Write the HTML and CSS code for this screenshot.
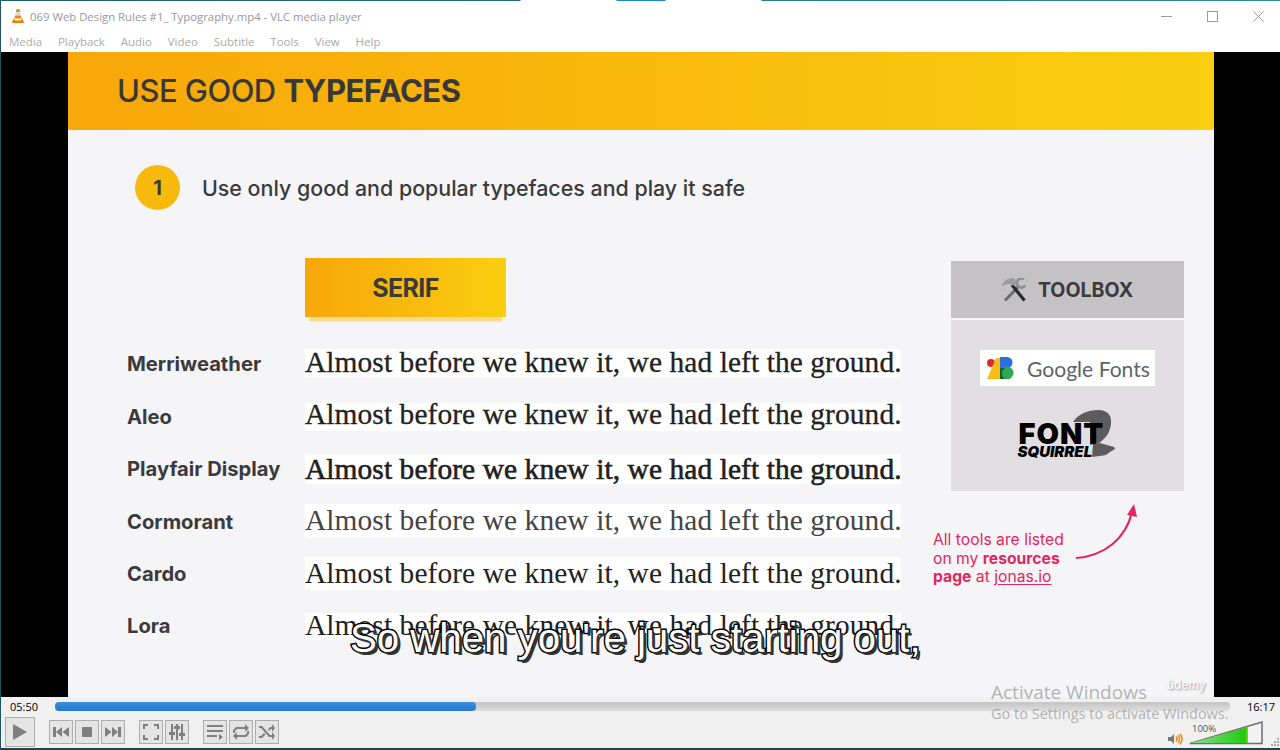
FILE: index.html
```html
<!DOCTYPE html>
<html lang="en">
<head>
<meta charset="UTF-8" />
<title>069 Web Design Rules #1_ Typography.mp4 - VLC media player</title>
<link rel="stylesheet" href="styles.css">
</head>
<body>

<div class="window">
  <div class="titlebar">
    <svg class="cone" viewBox="0 0 16 16" width="16" height="16">
      <path d="M6.6 1h2.8l.7 3H5.900z" fill="#f08a0c"/>
      <path d="M5.800 4.200h4.400l.6 3H5.200z" fill="#d8d8d8"/>
      <path d="M5.100 7.400h5.800l.7 3.200H4.400z" fill="#f08a0c"/>
      <path d="M3.600 10.600h1l-.3 1.300c1.800.7 5.600.7 7.400 0l-.3-1.300h1l1.600 4.400H2z" fill="#ee7d05"/>
    </svg>
    <span class="title-text">069 Web Design Rules #1_ Typography.mp4 - VLC media player</span>
    <div class="win-buttons">
      <svg viewBox="0 0 11 11" width="11" height="11"><path d="M0 5.500h11" stroke="#9a9a9a" fill="none"/></svg>
      <svg viewBox="0 0 11 11" width="11" height="11"><rect x=".5" y=".5" width="10" height="10" stroke="#9a9a9a" fill="none"/></svg>
      <svg viewBox="0 0 11 11" width="11" height="11"><path d="M.5.5l10 10M10.500.5l-10 10" stroke="#9a9a9a" fill="none"/></svg>
    </div>
  </div>

  <div class="menubar">
    <span>Media</span>
    <span>Playback</span>
    <span>Audio</span>
    <span>Video</span>
    <span>Subtitle</span>
    <span>Tools</span>
    <span>View</span>
    <span>Help</span>
  </div>

  <div class="video">
    <div class="slide">
      <div class="slide-header">
        <h1>USE GOOD <b>TYPEFACES</b></h1>
      </div>

      <div class="step">
        <span class="step-num">1</span>
        <span class="step-text">Use only good and popular typefaces and play it safe</span>
      </div>

      <div class="columns">
        <div class="fonts">
          <div class="chip">SERIF</div>

          <div class="font-name">Merriweather</div>
          <div class="sample merriweather">Almost before we knew it, we had left the ground.</div>
          <div class="font-name">Aleo</div>
          <div class="sample aleo">Almost before we knew it, we had left the ground.</div>
          <div class="font-name">Playfair Display</div>
          <div class="sample playfair">Almost before we knew it, we had left the ground.</div>
          <div class="font-name">Cormorant</div>
          <div class="sample cormorant">Almost before we knew it, we had left the ground.</div>
          <div class="font-name">Cardo</div>
          <div class="sample cardo">Almost before we knew it, we had left the ground.</div>
          <div class="font-name">Lora</div>
          <div class="sample lora">Almost before we knew it, we had left the ground.</div>
        </div>

        <div class="side">
          <div class="toolbox-head">
            <svg viewBox="0 0 24 24" width="24" height="24">
              <path d="M3 22.500L16 9" stroke="#6d6f72" stroke-width="3.200" fill="none"/>
              <path d="M22 1.200A4.500 4.500 0 1 0 23.200 7.500" stroke="#8a8c8f" stroke-width="2.600" fill="none"/>
              <path d="M10 7l12.500 15.500" stroke="#2a2a2a" stroke-width="3.200" fill="none"/>
              <path d="M0 9C0 4 5 0 11 0l4.500 3-2.500 5-4-1.500C6 5.500 3 6 0 9z" fill="#9a9c9f"/>
            </svg>
            <span>TOOLBOX</span>
          </div>
          <div class="toolbox-body">
            <div class="gfonts">
              <svg viewBox="0 0 27 22" width="27" height="22">
                <circle cx="4" cy="6" r="4" fill="#e0282e"/>
                <path d="M0 22L9 1h4v21z" fill="#f9bc15"/>
                <path d="M13 0h7a5.500 5.500 0 0 1 0 11h-7z" fill="#2b6fdb"/>
                <circle cx="20" cy="16" r="6.500" fill="#2fa84f"/>
                <path d="M13 11h5a6.500 6.500 0 0 0 0 11h-5z" fill="#0d652d"/>
              </svg>
              <span>Google Fonts</span>
            </div>
            <div class="squirrel">
              <svg viewBox="0 0 100 54" width="100" height="54">
                <path d="M55 14C60 6 70 2 80 2c10 0 14 6 13 14-1 9-6 15-12 19l-9 2V14z" fill="#5d5b5e"/>
                <path d="M75 36l7-1 7 2 7 2 1 2-5 3-4 3-6 1-8 1z" fill="#5d5b5e"/>
              </svg>
              <span class="squirrel-font">FONT</span>
              <span class="squirrel-name">SQUIRREL</span>
            </div>
          </div>

          <div class="note">
            <p>All tools are listed<br>on my <b>resources</b><br><b>page</b> at <u>jonas.io</u></p>
            <svg class="note-arrow" viewBox="0 0 66 60" width="66" height="60">
              <path d="M1 54c29-2 50-20 56-46" fill="none" stroke="#e0285f" stroke-width="2.200"/>
              <path d="M52 11L59 0l3 13z" fill="#e0285f"/>
            </svg>
          </div>
        </div>
      </div>
    </div>
  </div>

  <div class="controls">
    <div class="seek-row">
      <span class="time">05:50</span>
      <div class="seek"><div class="seek-fill"></div></div>
      <span class="time">16:17</span>
    </div>
    <div class="button-row">
      <button class="btn btn-play"><svg viewBox="0 0 16 16" width="16" height="16"><path d="M1 0l14 8-14 8z"/></svg></button>
      <div class="btn-group">
        <button class="btn"><svg viewBox="0 0 16 12" width="16" height="12"><path d="M0 1h3v10H0zM9 1v10L3 6zM16 1v10L9.500 6z"/></svg></button>
        <button class="btn"><svg viewBox="0 0 10 10" width="10" height="10"><path d="M0 0h10v10H0z"/></svg></button>
        <button class="btn"><svg viewBox="0 0 16 12" width="16" height="12"><path d="M16 1h-3v10h3zM7 1v10l6-5zM0 1v10l6.500-5z"/></svg></button>
      </div>
      <div class="btn-group">
        <button class="btn"><svg viewBox="0 0 16 16" width="16" height="16"><path d="M0 5V0h5v2H2v3zM11 0h5v5h-2V2h-3zM0 11h2v3h3v2H0zM14 11h2v5h-5v-2h3z"/></svg></button>
        <button class="btn"><svg viewBox="0 0 16 16" width="16" height="16"><path d="M2 0h2v8h2v3H4v5H2v-5H0V8h2zM7 0h2v2h2v3H9v11H7V5H5V2h2zM12 0h2v9h2v3h-2v4h-2v-4h-2V9h2z"/></svg></button>
      </div>
      <div class="btn-group">
        <button class="btn"><svg viewBox="0 0 16 16" width="16" height="16"><path d="M0 1h16v2H0zM0 6h16v2H0zM0 11h10v2H0zM12 10l4 3-4 3z"/></svg></button>
        <button class="btn"><svg viewBox="0 0 16 16" width="16" height="16"><path d="M3 3h9V0l4 4-4 4V5H4L2 7v2H0V6zM13 13H4v3l-4-4 4-4v3h8l2-2V7h2v3z"/></svg></button>
        <button class="btn"><svg viewBox="0 0 16 16" width="16" height="16"><path d="M0 2h3l8 9h2V8l3 4-3 4v-3h-3L2 4H0zM0 12h2l3-3 1.500 1.500L3 14H0zM9 5.500L11 3h2V0l3 4-3 4V5h-1.500L10.500 7z"/></svg></button>
      </div>
      <div class="volume">
        <svg viewBox="0 0 15 12" width="15" height="12">
          <path d="M0 4h3l3-3v10L3 8H0z" fill="#777"/>
          <path d="M8 3.500c1.300 1.400 1.300 3.600 0 5M10 2c2 2.200 2 5.800 0 8M12 .8c2.800 3 2.800 7.400 0 10.400" stroke="#ee8a1a" fill="none" stroke-width="1.500"/>
        </svg>
        <div class="volume-wedge">
          <svg viewBox="0 0 74 24" width="74" height="24">
            <defs>
              <linearGradient id="vol" x1="0" x2="1" y1="0" y2="0">
                <stop offset="0" stop-color="#8fdc8f"/>
                <stop offset=".95" stop-color="#22c911"/>
                <stop offset="1" stop-color="#9ad40a"/>
              </linearGradient>
            </defs>
            <path d="M1 22.500L73 1v21.500z" fill="#f2f2f2" stroke="#6f6f6f" stroke-width="1.500"/>
            <path d="M2 22L59 6v16z" fill="url(#vol)"/>
          </svg>
          <span class="volume-label">100%</span>
        </div>
      </div>
    </div>
    <svg class="grip" viewBox="0 0 8 8" width="8" height="8">
      <path d="M6 0h2v2H6zM3 3h2v2H3zM6 3h2v2H6zM0 6h2v2H0zM3 6h2v2H3zM6 6h2v2H6z" fill="#aaa"/>
    </svg>
  </div>

  <div class="topstrip"></div>
  <div class="subtitle">So when you're just starting out,</div>
  <div class="udemy">ûdemy</div>
  <div class="activate">
    <div class="activate-title">Activate Windows</div>
    <div>Go to Settings to activate Windows.</div>
  </div>
</div>

</body>
</html>
```

FILE: styles.css
```css
* {
  box-sizing: border-box;
  margin: 0;
  padding: 0;
}

body {
  background: #fff;
  font-family: 'Open Sans', sans-serif;
}

.window {
  position: relative;
  width: 1280px;
  height: 750px;
  display: flex;
  flex-direction: column;
  border-left: 1px solid #1f5560;
  border-bottom: 2px solid #1f4650;
  overflow: hidden;
}

.topstrip {
  position: absolute;
  top: 0;
  left: 0;
  right: 0;
  height: 1px;
  background: linear-gradient(90deg, #1f5f6b 0, #1f6f7a 519px, #fff 520px, #fff 615px, #1a88c8 616px, #1a88c8 664px, #fff 665px, #fff 760px, #1f7f8a 761px, #2a8a96 1280px);
}

/* title and menu */
.titlebar {
  height: 30px;
  margin-top: 1px;
  display: flex;
  align-items: center;
  padding-left: 9px;
  background: #fff;
  flex-shrink: 0;
}

.title-text {
  margin-left: 4px;
  font-size: 11.35px;
  color: #999;
}

.win-buttons {
  margin-left: auto;
  display: flex;
  gap: 35px;
  padding-right: 16px;
}

.menubar {
  height: 21px;
  display: flex;
  align-items: center;
  gap: 15.8px;
  padding-left: 8px;
  font-size: 11.5px;
  color: #aaa;
  background: #fff;
  flex-shrink: 0;
}

/* video area */
.video {
  height: 645px;
  background: #000;
  padding: 0 66px 0 67px;
  flex-shrink: 0;
}

.slide {
  height: 100%;
  background: #f5f5f8;
  font-family: 'Inter', sans-serif;
  color: #3a3a3c;
}

.slide-header {
  height: 78px;
  padding: 0 0 2px 49px;
  display: flex;
  align-items: center;
  background: linear-gradient(90deg, #f7a70a, #f9b90c 50%, #f9cf10);
}

.slide-header h1 {
  font-size: 30.95px;
  font-weight: 500;
  letter-spacing: -0.5px;
  color: #38383a;
}

.step {
  display: flex;
  align-items: center;
  gap: 22px;
  margin: 35px 0 0 67px;
}

.step-num {
  width: 45px;
  height: 45px;
  border-radius: 50%;
  background: #f8b90d;
  display: flex;
  align-items: center;
  justify-content: center;
  font-size: 20px;
  font-weight: 700;
}

.step-text {
  font-size: 21.4px;
  font-weight: 500;
}

.columns {
  display: flex;
  margin-top: 48px;
  padding-left: 59px;
}

.fonts {
  display: grid;
  grid-template-columns: 178px 596px;
  grid-template-rows: 79.8px;
  grid-auto-rows: 52.4px;
  align-content: start;
  align-items: center;
}

.chip {
  grid-column: 2;
  align-self: start;
  width: 201px;
  height: 59px;
  display: flex;
  align-items: center;
  justify-content: center;
  font-size: 25px;
  font-weight: 700;
  letter-spacing: -0.6px;
  background: linear-gradient(90deg, #f7a70a, #f9b90c 50%, #f9cf10);
  box-shadow: 0 8.5px 0 -4px #fdd88e;
}

.font-name {
  font-size: 20.2px;
  font-weight: 700;
}

.sample {
  align-self: start;
  background: #fff;
  white-space: nowrap;
  font-family: 'Liberation Serif', serif;
  font-size: 29.4px;
  letter-spacing: 0.1px;
  color: #222;
}

/* each face sat on a differently sized white band in the slide */
.merriweather { margin-top: 11.2px; height: 28px; line-height: 26px; -webkit-text-stroke: 0.3px #222; }
.aleo { margin-top: 12.8px; height: 28px; line-height: 22px; -webkit-text-stroke: 0.3px #222; }
.playfair { margin-top: 11.4px; height: 30px; line-height: 30px; -webkit-text-stroke: 0.6px #1d1d1d; }
.cormorant { margin-top: 9px; height: 34px; line-height: 32px; color: #444; }
.cardo { margin-top: 9.6px; height: 33px; line-height: 32px; }
.lora { margin-top: 13.2px; height: 27px; line-height: 24px; }

/* toolbox */
.side {
  width: 233px;
  margin-left: 50px;
  margin-top: 3px;
}

.toolbox-head {
  height: 57px;
  display: flex;
  align-items: center;
  justify-content: center;
  gap: 12px;
  background: #c4c2c4;
  font-size: 19.6px;
  font-weight: 700;
}

.toolbox-body {
  height: 171px;
  margin-top: 2px;
  padding-top: 30px;
  display: flex;
  flex-direction: column;
  align-items: center;
  background: #e1dfe2;
}

.gfonts {
  width: 175px;
  height: 36px;
  display: flex;
  align-items: center;
  gap: 13px;
  padding-left: 7px;
  background: #fff;
  font-family: 'Lato', sans-serif;
  font-size: 21.1px;
  color: #5f6368;
  white-space: nowrap;
}

.squirrel {
  position: relative;
  width: 100px;
  height: 54px;
  margin-top: 22px;
}

.squirrel svg {
  position: absolute;
  top: 0;
  left: 0;
}

.squirrel-font {
  position: absolute;
  left: 1px;
  top: 11px;
  font-size: 29px;
  line-height: 29px;
  font-weight: 900;
  letter-spacing: 1px;
  color: #000;
}

.squirrel-name {
  position: absolute;
  left: 0;
  top: 36px;
  font-size: 15px;
  line-height: 16px;
  font-weight: 900;
  font-style: italic;
  color: #000;
}

.note {
  position: relative;
  margin: 40px 0 0 -18px;
  font-size: 15.7px;
  line-height: 18.5px;
  color: #e0285f;
}

.note u {
  text-underline-offset: 2px;
}

.note-arrow {
  position: absolute;
  left: 142px;
  top: -27px;
}

/* player controls */
.controls {
  position: relative;
  flex: 1;
  background: #f0f0f0;
}

.seek-row {
  height: 20px;
  display: flex;
  align-items: center;
  padding: 0 5px 2px 9px;
  gap: 17px;
}

.time {
  font-size: 11px;
  color: #000;
}

.seek {
  flex: 1;
  height: 9px;
  border-radius: 4px;
  background: linear-gradient(#c4c4c4, #dcdcdc);
}

.seek-fill {
  width: 421px;
  height: 100%;
  border-radius: 4px;
  background: linear-gradient(#3a8ee0, #2478cc);
}

.button-row {
  display: flex;
  align-items: center;
  padding-left: 4px;
}

.btn {
  width: 24px;
  height: 24px;
  display: flex;
  align-items: center;
  justify-content: center;
  background: #e4e4e4;
  border: 1px solid #adadad;
}

.btn svg {
  fill: #7f7f7f;
}

.btn-play {
  width: 30px;
  height: 30px;
}

.btn-group {
  display: flex;
  gap: 2px;
  margin-left: 14px;
}

.volume {
  margin-left: auto;
  display: flex;
  align-items: flex-end;
  gap: 6px;
  padding-right: 17px;
  margin-top: 1px;
}

.volume-wedge {
  position: relative;
  height: 24px;
}

.volume-label {
  position: absolute;
  left: 3px;
  top: 1px;
  font-size: 9.5px;
  color: #555;
}

.grip {
  position: absolute;
  right: 1px;
  bottom: 2px;
}

/* overlays */
.subtitle {
  position: absolute;
  left: 349px;
  top: 615px;
  font-family: 'Liberation Sans', sans-serif;
  font-size: 40.2px;
  line-height: 48px;
  white-space: nowrap;
  color: #fff;
  -webkit-text-stroke: 3px #000;
  paint-order: stroke fill;
  text-shadow: 3px 3px 0 #333;
}

.udemy {
  position: absolute;
  left: 1166px;
  top: 677px;
  font-family: 'Inter', sans-serif;
  font-size: 12px;
  color: #fff;
  text-shadow: 1px 1px 2px #888;
}

.activate {
  position: absolute;
  left: 990px;
  top: 680px;
  font-size: 14.5px;
  color: rgba(120, 120, 120, 0.55);
  white-space: nowrap;
}

.activate-title {
  font-size: 19px;
  line-height: 24px;
}
```
